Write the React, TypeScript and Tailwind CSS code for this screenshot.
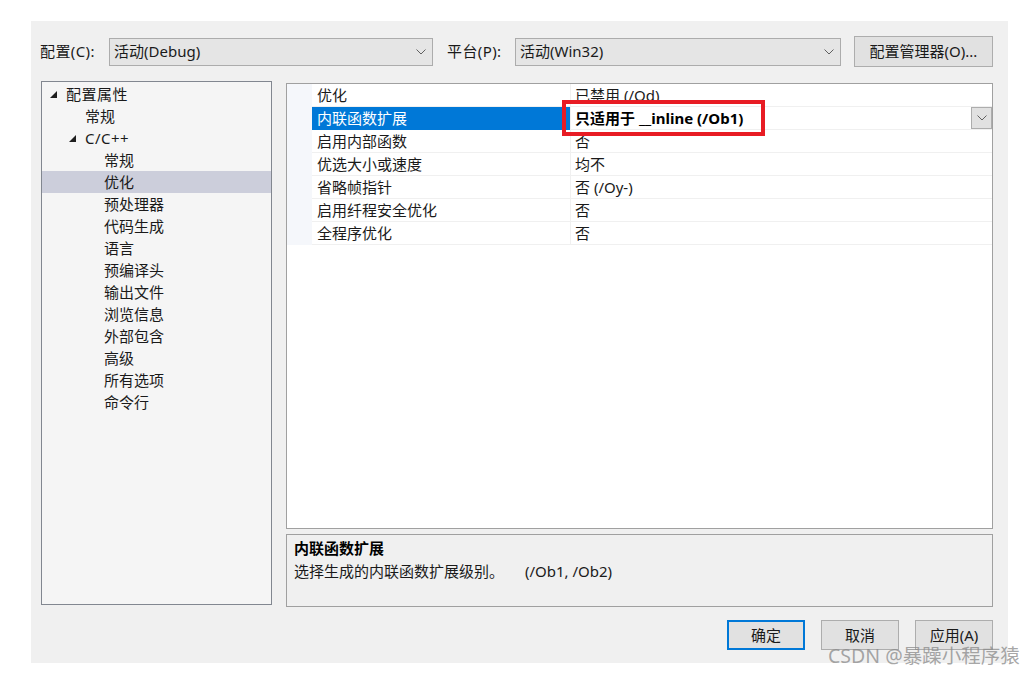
import React from 'react';

const treeItems: { label: string; indent: number; arrow?: boolean; selected?: boolean }[] = [
    { label: '配置属性', indent: 8, arrow: true },
    { label: '常规', indent: 43 },
    { label: 'C/C++', indent: 27, arrow: true },
    { label: '常规', indent: 62 },
    { label: '优化', indent: 62, selected: true },
    { label: '预处理器', indent: 62 },
    { label: '代码生成', indent: 62 },
    { label: '语言', indent: 62 },
    { label: '预编译头', indent: 62 },
    { label: '输出文件', indent: 62 },
    { label: '浏览信息', indent: 62 },
    { label: '外部包含', indent: 62 },
    { label: '高级', indent: 62 },
    { label: '所有选项', indent: 62 },
    { label: '命令行', indent: 62 },
];

const props: { name: string; value: string }[] = [
    { name: '优化', value: '已禁用 (/Od)' },
    { name: '内联函数扩展', value: '只适用于 __inline (/Ob1)' },
    { name: '启用内部函数', value: '否' },
    { name: '优选大小或速度', value: '均不' },
    { name: '省略帧指针', value: '否 (/Oy-)' },
    { name: '启用纤程安全优化', value: '否' },
    { name: '全程序优化', value: '否' },
];

const Chevron = () => (
    <svg width="10" height="6" viewBox="0 0 10 6" className="shrink-0">
        <polyline points="0.5,0.5 5,5 9.5,0.5" fill="none" stroke="#606060" strokeWidth="1" />
    </svg>
);

const Expander = () => (
    <svg width="7" height="7" viewBox="0 0 7 7" className="shrink-0">
        <polygon points="7,0 7,7 0,7" fill="#1e1e1e" />
    </svg>
);

const Combo = ({ text, width }: { text: string; width: string }) => (
    <div className={`${width} h-[28px] flex items-center justify-between pl-[4px] pr-[6px] bg-[#e5e5e5] border border-[#acacac]`}>
        <span>{text}</span>
        <Chevron />
    </div>
);

const DlgButton = ({ label, primary }: { label: string; primary?: boolean }) => (
    <button
        className={
            primary
                ? 'w-[78px] h-[30px] bg-[#e1e1e1] border-2 border-[#0078d7] flex items-center justify-center'
                : 'w-[78px] h-[30px] bg-[#e1e1e1] border border-[#adadad] flex items-center justify-center'
        }
    >
        {label}
    </button>
);

export default function App() {
    return (
        <div className="relative w-[1035px] h-[675px] bg-white text-[15px] text-[#1a1a1a] font-['Noto_Sans','Noto_Sans_CJK_SC',sans-serif] overflow-hidden">
            <div className="ml-[31px] pt-[21px]">
                <div className="w-[977px] h-[642px] bg-[#f0f0f0] flex flex-col">
                    {/* top bar */}
                    <div className="flex items-center mt-[15px] h-[31px]">
                        <span className="ml-[9px] w-[69px] tracking-[0.4px]">配置(C):</span>
                        <Combo text="活动(Debug)" width="w-[324px]" />
                        <span className="ml-[14px] w-[68px] tracking-[0.4px]">平台(P):</span>
                        <Combo text="活动(Win32)" width="w-[326px]" />
                        <button className="ml-[13px] w-[139px] h-[31px] bg-[#e1e1e1] border border-[#adadad] flex items-center justify-center">
                            配置管理器(O)...
                        </button>
                    </div>

                    <div className="flex mt-[14px]">
                        {/* tree */}
                        <div className="ml-[10px] w-[231px] h-[524px] bg-[#f5f5f5] border border-[#828790] pt-[1px]">
                            {treeItems.map((item, i) => (
                                <div
                                    key={i}
                                    className={`h-[22px] flex items-center ${item.selected ? 'bg-[#cccedb]' : ''}`}
                                    style={{ paddingLeft: item.indent }}
                                >
                                    {item.arrow && <Expander />}
                                    <span className={item.arrow ? 'ml-[9px] tracking-[0.5px]' : ''}>{item.label}</span>
                                </div>
                            ))}
                        </div>

                        {/* property grid + description */}
                        <div className="ml-[14px] mt-[2px] w-[707px] flex flex-col">
                            <div className="h-[446px] bg-white border border-[#a0a0a0]">
                                {props.map((p, i) => {
                                    const sel = i === 1;
                                    return (
                                        <div key={i} className="flex h-[23px]">
                                            <div className="w-[25px] bg-[#f5f7fb]" />
                                            <div
                                                className={`w-[258px] pl-[5px] flex items-center border-b ${
                                                    sel ? 'bg-[#0078d7] text-white border-[#0078d7]' : 'border-[#f0f0f0]'
                                                }`}
                                            >
                                                {p.name}
                                            </div>
                                            <div className="flex-1 flex items-center justify-between pl-[4px] border-l border-b border-[#f0f0f0]">
                                                <span className={sel ? 'font-bold text-black' : ''}>{p.value}</span>
                                                {sel && (
                                                    <div className="w-[21px] h-[22px] bg-[#e1e1e1] border border-[#adadad] flex items-center justify-center">
                                                        <Chevron />
                                                    </div>
                                                )}
                                            </div>
                                        </div>
                                    );
                                })}
                            </div>
                            <div className="mt-[5px] h-[73px] bg-[#f0f0f0] border border-[#a0a0a0] pl-[7px] pt-[2px] leading-[23px]">
                                <div className="font-bold text-black">内联函数扩展</div>
                                <div>
                                    <span className="inline-block w-[231px]">选择生成的内联函数扩展级别。</span>
                                    <span>(/Ob1, /Ob2)</span>
                                </div>
                            </div>
                        </div>
                    </div>

                    {/* dialog buttons */}
                    <div className="flex justify-end gap-[16px] mt-[13px] pr-[15px]">
                        <DlgButton label="确定" primary />
                        <DlgButton label="取消" />
                        <DlgButton label="应用(A)" />
                    </div>
                </div>
            </div>

            {/* red annotation box */}
            <div className="absolute left-[562px] top-[100px] w-[203px] h-[36px] border-[4px] border-[#e81c24]" />

            {/* watermark */}
            <div className="absolute left-[828px] top-[642px] text-[19.5px] leading-[27px] text-[#8a8a8a]/75 whitespace-nowrap">
                CSDN @暴躁小程序猿
            </div>
        </div>
    );
}
